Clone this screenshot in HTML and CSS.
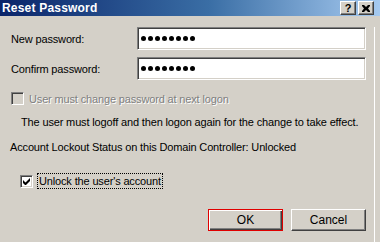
FILE: index.html
```html
<!DOCTYPE html>
<html lang="en">
<head>
  <meta charset="UTF-8">
  <title>Reset Password</title>
  <link rel="stylesheet" href="styles.css">
</head>
<body>
  <div class="titlebar">
    <span class="title">Reset Password</span>
    <div class="caption-btns">
      <button class="cap-btn help">?</button>
      <button class="cap-btn close">
        <svg width="8" height="7" viewBox="0 0 8 7"><path d="M0 0h2l2 2 2-2h2v1L6 3.5 8 6v1H6L4 5 2 7H0V6l2-2.5L0 1z" fill="#000"/></svg>
      </button>
    </div>
  </div>

  <main class="dialog">
    <div class="field-row">
      <label class="field-label">New password:</label>
      <div class="field"><span class="dot"></span><span class="dot"></span><span class="dot"></span><span class="dot"></span><span class="dot"></span><span class="dot"></span><span class="dot"></span><span class="dot"></span></div>
    </div>
    <div class="field-row second">
      <label class="field-label">Confirm password:</label>
      <div class="field"><span class="dot"></span><span class="dot"></span><span class="dot"></span><span class="dot"></span><span class="dot"></span><span class="dot"></span><span class="dot"></span><span class="dot"></span></div>
    </div>

    <div class="check-row disabled">
      <span class="checkbox"></span>
      <span class="check-text">User must change password at next logon</span>
    </div>

    <p class="note">The user must logoff and then logon again for the change to take effect.</p>
    <p class="status">Account Lockout Status on this Domain Controller: Unlocked</p>

    <div class="check-row checked">
      <span class="checkbox">
        <svg width="7" height="7" viewBox="0 0 7 7"><path d="M0 2v3l2 2h1l4-4V0L2.5 4.5z" fill="#000"/></svg>
      </span>
      <span class="check-text focus">Unlock the user's account</span>
    </div>

    <div class="buttons">
      <button class="btn default">OK</button>
      <button class="btn">Cancel</button>
    </div>
  </main>
</body>
</html>
```

FILE: styles.css
```css
body {
  margin: 0;
  width: 380px;
  height: 242px;
  overflow: hidden;
  background: #d4d0c8;
  font-family: "Liberation Sans", Arial, sans-serif;
  font-size: 11px;
  letter-spacing: -0.15px;
  color: #000;
}

.titlebar {
  height: 16px;
  display: flex;
  align-items: center;
  justify-content: space-between;
  padding: 0 6px 0 2px;
  background: linear-gradient(to right, #0a246a, #3a6ea5 55%, #a6caf0);
}
.title {
  color: #fff;
  font-weight: bold;
  font-size: 12px;
  letter-spacing: 0.2px;
}
.caption-btns {
  display: flex;
  gap: 2px;
}
.cap-btn {
  width: 16px;
  height: 14px;
  padding: 0;
  margin: 0;
  display: flex;
  align-items: center;
  justify-content: center;
  background: #d4d0c8;
  border: 1px solid;
  border-color: #fff #404040 #404040 #fff;
  box-shadow: inset -1px -1px #808080;
  font-family: "Liberation Sans", Arial, sans-serif;
  font-weight: bold;
  font-size: 11px;
  line-height: 1;
  color: #000;
}

.dialog {
  height: 226px;
  width: 375px;
  box-sizing: border-box;
  border-right: 1px solid #fff;
}

.field-row {
  display: flex;
  align-items: center;
  height: 23px;
  margin-top: 11px;
}
.field-row.second {
  margin-top: 7px;
}
.field-label {
  width: 126px;
  padding-left: 11px;
}
.field {
  width: 229px;
  height: 23px;
  box-sizing: border-box;
  display: flex;
  align-items: center;
  gap: 2px;
  padding-left: 3px;
  background: #fff;
  border: 1px solid;
  border-color: #808080 #fff #fff #808080;
  box-shadow: inset 1px 1px #404040, inset -1px -1px #d4d0c8;
}
.dot {
  width: 5px;
  height: 5px;
  border-radius: 50%;
  background: #000;
}

.check-row {
  display: flex;
  align-items: center;
  gap: 5px;
  margin-top: 12px;
  padding-left: 11px;
  height: 13px;
}
.checkbox {
  width: 13px;
  height: 13px;
  box-sizing: border-box;
  display: flex;
  align-items: center;
  justify-content: center;
  background: #fff;
  border: 1px solid;
  border-color: #808080 #fff #fff #808080;
  box-shadow: inset 1px 1px #404040, inset -1px -1px #d4d0c8;
}
.disabled .checkbox {
  background: #d4d0c8;
}
.disabled .check-text {
  color: #808080;
  text-shadow: 1px 1px #fff;
}

.note {
  margin: 11px 0 0;
  padding-left: 21px;
  line-height: 13px;
}
.status {
  margin: 12px 0 0;
  padding-left: 10px;
  line-height: 13px;
}

.check-row.checked {
  margin-top: 19px;
  padding-left: 20px;
  height: 16px;
  gap: 4px;
}
.focus {
  line-height: 14px;
  padding: 0 1px;
  border: 1px dotted #000;
}

.buttons {
  display: flex;
  justify-content: flex-end;
  gap: 8px;
  margin-top: 20px;
  padding-right: 8px;
}
.btn {
  width: 75px;
  height: 22px;
  padding: 0;
  background: #d4d0c8;
  border: 1px solid;
  border-color: #fff #404040 #404040 #fff;
  box-shadow: inset -1px -1px #808080;
  font-family: "Liberation Sans", Arial, sans-serif;
  font-size: 12px;
  color: #000;
}
.btn.default {
  border-color: #e00000;
  box-shadow: inset 1px 1px #fff, inset -1px -1px #404040, inset -2px -2px #808080;
}
```
